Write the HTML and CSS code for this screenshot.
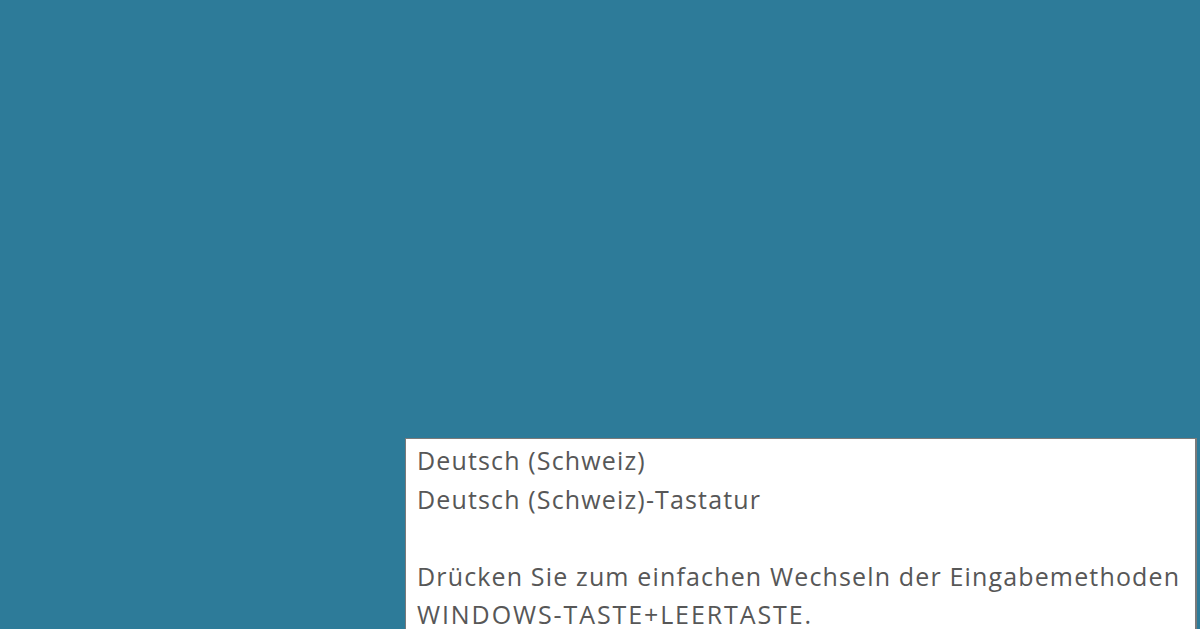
FILE: index.html
```html
<!DOCTYPE html>
<html>
<head>
<meta charset="utf-8">
<link rel="stylesheet" href="styles.css">
</head>
<body>
<div class="desktop">
  <div class="tooltip">
    <div class="line">Deutsch (Schweiz)</div>
    <div class="line">Deutsch (Schweiz)-Tastatur</div>
    <div class="line blank">&nbsp;</div>
    <div class="line">Drücken Sie zum einfachen Wechseln der Eingabemethoden</div>
    <div class="line caps">WINDOWS-TASTE+LEERTASTE.</div>
  </div>
</div>
</body>
</html>
```
FILE: styles.css
```css
html, body {
  margin: 0;
  padding: 0;
  width: 1200px;
  height: 629px;
  overflow: hidden;
  background: #2d7b99;
}
.desktop {
  width: 1200px;
  height: 629px;
  display: flex;
  flex-direction: column;
  padding: 438px 0 0 405px;
  box-sizing: border-box;
}
.tooltip {
  width: 792px;
  box-sizing: border-box;
  background: #ffffff;
  border: 1px solid #7a7a7a;
  border-right-width: 2px;
  padding: 2px 8px 0 11px;
  font-family: "Open Sans", sans-serif;
  font-size: 25px;
  letter-spacing: 1.15px;
  line-height: 38.5px;
  color: #575757;
  flex: 1 0 auto;
}
.line {
  white-space: nowrap;
}
.caps {
  letter-spacing: 1.9px;
}
```
